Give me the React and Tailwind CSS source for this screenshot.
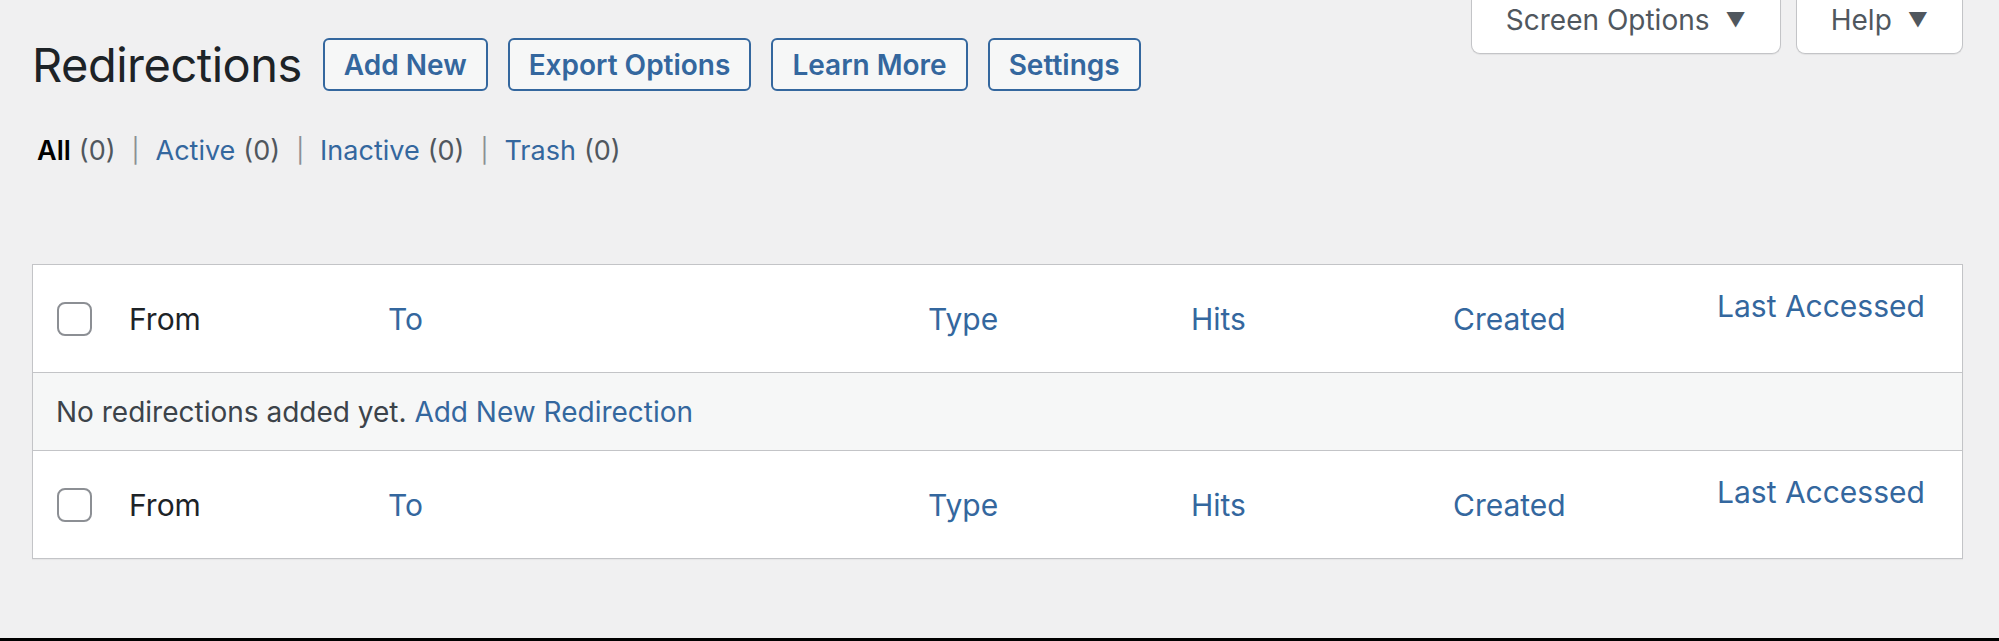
import { useState } from "react";

const blue = "text-[#34679e]";

const columns = [
    { label: "From", link: false },
    { label: "To", link: true },
    { label: "Type", link: true },
    { label: "Hits", link: true },
    { label: "Created", link: true },
    { label: "Last Accessed", link: true, raised: true },
];

const filters = [
    { label: "All", count: 0, current: true },
    { label: "Active", count: 0 },
    { label: "Inactive", count: 0 },
    { label: "Trash", count: 0 },
];

const Checkbox = ({ checked, onChange }) => (
    <button
        type="button"
        onClick={onChange}
        className="w-[35px] h-[34px] rounded-[8px] border-2 border-[#8c8f94] bg-white flex items-center justify-center"
    >
        {checked && (
            <svg viewBox="0 0 20 20" className="w-[26px] h-[26px]">
                <path
                    d="M4 10.5l4 4 8-9"
                    fill="none"
                    stroke="#2271b1"
                    strokeWidth="2.5"
                />
            </svg>
        )}
    </button>
);

const HeaderRow = ({ checked, onToggle, height }) => (
    <div
        className={`grid grid-cols-[76px_259px_540px_263px_262px_264px_1fr] ${height}`}
    >
        <div className="flex items-center pl-[24px]">
            <Checkbox checked={checked} onChange={onToggle} />
        </div>
        {columns.map((col) => (
            <div
                key={col.label}
                className={`flex items-center pl-[20px] text-[30px] leading-[40px] ${
                    col.link ? blue : "text-[#1d2327]"
                }`}
            >
                <span className={col.raised ? "mb-[26px]" : ""}>
                    {col.label}
                </span>
            </div>
        ))}
    </div>
);

const TitleButton = ({ children }) => (
    <button
        type="button"
        className={`h-[53px] px-[19px] rounded-[6px] border-2 border-[#34679e] bg-[#f6f7f7] text-[28px] font-semibold ${blue}`}
    >
        {children}
    </button>
);

const MetaTab = ({ children }) => (
    <button
        type="button"
        className="h-[54px] flex items-start pt-[4px] px-[34px] bg-white border border-t-0 border-[#c3c4c7] rounded-b-[9px] shadow-[0_1px_1px_rgba(0,0,0,0.06)] text-[28px] leading-[32px] text-[#50575e]"
    >
        {children}
        <span className="ml-[16px] text-[20px]">▼</span>
    </button>
);

export default function App() {
    const [checked, setChecked] = useState(false);

    return (
        <div className="w-full h-[641px] overflow-hidden bg-[#f0f0f1] border-b-[3px] border-black font-['Inter','Liberation_Sans',sans-serif]">
            {/* Header */}
            <div className="flex justify-between items-start pl-[32px] pr-[36px]">
                <div className="flex items-center gap-[21px] mt-[38px]">
                    <h1 className="text-[47px] leading-[53px] text-[#1d2327] tracking-[-0.5px]">
                        Redirections
                    </h1>
                    <div className="flex gap-[20px]">
                        <TitleButton>Add New</TitleButton>
                        <TitleButton>Export Options</TitleButton>
                        <TitleButton>Learn More</TitleButton>
                        <TitleButton>Settings</TitleButton>
                    </div>
                </div>
                <div className="flex gap-[15px]">
                    <MetaTab>Screen Options</MetaTab>
                    <MetaTab>Help</MetaTab>
                </div>
            </div>

            {/* Filter links */}
            <ul className="flex items-center mt-[44px] pl-[37px] text-[27px] leading-[32px] text-[#50575e]">
                {filters.map((f, i) => (
                    <li key={f.label} className="flex items-center">
                        {i > 0 && (
                            <span className="mx-[16px] text-[24px] text-[#8c8f94]">
                                |
                            </span>
                        )}
                        <span
                            className={
                                f.current
                                    ? "font-semibold text-black"
                                    : blue
                            }
                        >
                            {f.label}
                        </span>
                        <span className="ml-[8px]">({f.count})</span>
                    </li>
                ))}
            </ul>

            {/* Table */}
            <div className="mt-[97px] ml-[32px] mr-[36px] bg-white border border-[#c3c4c7] shadow-[0_1px_1px_rgba(0,0,0,0.04)]">
                <HeaderRow
                    checked={checked}
                    onToggle={() => setChecked(!checked)}
                    height="h-[107px]"
                />
                <div className="h-[79px] flex items-center pl-[23px] bg-[#f6f7f7] border-y border-[#c3c4c7] text-[28px] text-[#3c434a]">
                    No redirections added yet.&nbsp;
                    <span className={blue}>Add New Redirection</span>
                </div>
                <HeaderRow
                    checked={checked}
                    onToggle={() => setChecked(!checked)}
                    height="h-[107px]"
                />
            </div>
        </div>
    );
}
